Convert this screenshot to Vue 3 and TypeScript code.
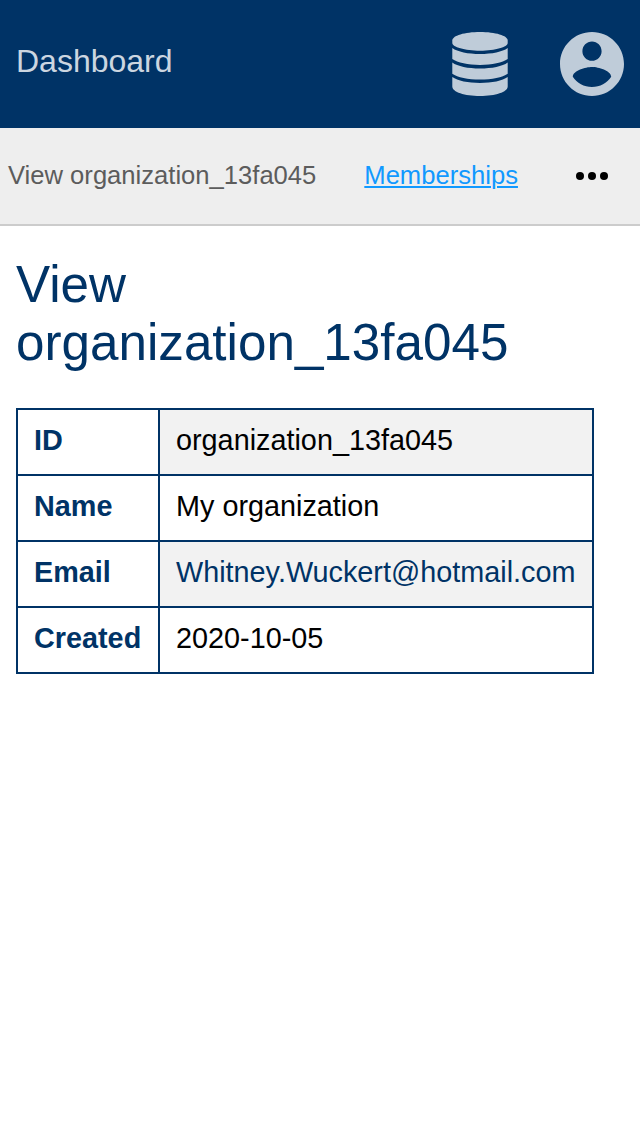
<script setup lang="ts">
interface Row { label: string; value: string; mail?: boolean }

const name = 'organization_13fa045'
const rows: Row[] = [
  { label: 'ID', value: name },
  { label: 'Name', value: 'My organization' },
  { label: 'Email', value: 'Whitney.Wuckert@hotmail.com', mail: true },
  { label: 'Created', value: '2020-10-05' },
]
</script>

<template>
  <div class="page">
    <header class="topbar">
      <a class="brand">Dashboard</a>
      <nav class="icons">
        <svg class="database" viewBox="4 0 56 64">
          <path d="M4.300 8.500C4.300 3.600 16.700 0 32 0S59.700 3.600 59.700 8.500V11C59.700 15 47.300 18.700 32 18.700S4.300 15 4.300 11Z" />
          <path d="M4.300 15.900C9.500 19.800 20 21.900 32 21.900S54.500 19.800 59.700 15.900V27.100C54.500 30.900 44 32.900 32 32.900S9.500 30.900 4.300 27.100Z" />
          <path d="M4.300 30.500C9.500 34.400 20 36.500 32 36.500S54.500 34.400 59.700 30.500V41.700C54.500 45.500 44 47.500 32 47.500S9.500 45.500 4.300 41.700Z" />
          <path d="M4.300 45.100C9.500 49 20 51 32 51S54.500 49 59.700 45.100V54.500C59.700 60 47.300 64 32 64S4.300 60 4.300 54.500Z" />
        </svg>
        <svg class="account" viewBox="2 2 20 20">
          <path d="M12 2C6.480 2 2 6.480 2 12s4.480 10 10 10 10-4.480 10-10S17.520 2 12 2zm0 3c1.660 0 3 1.340 3 3s-1.340 3-3 3-3-1.340-3-3 1.340-3 3-3zm0 14.200c-2.500 0-4.710-1.280-6-3.220.030-1.990 4-3.080 6-3.080 1.990 0 5.970 1.090 6 3.080-1.290 1.940-3.500 3.220-6 3.220z" />
        </svg>
      </nav>
    </header>
    <nav class="subbar">
      <span class="current">View {{ name }}</span>
      <a class="link">Memberships</a>
      <svg class="more" viewBox="0 0 32 8">
        <circle cx="4" cy="4" r="4" /><circle cx="16" cy="4" r="4" /><circle cx="28" cy="4" r="4" />
      </svg>
    </nav>
    <main>
      <h1>View {{ name }}</h1>
      <table>
        <tbody>
          <tr v-for="row in rows" :key="row.label">
            <th>{{ row.label }}</th>
            <td><a v-if="row.mail" class="mail">{{ row.value }}</a><template v-else>{{ row.value }}</template></td>
          </tr>
        </tbody>
      </table>
    </main>
  </div>
</template>

<style scoped>
.page {
  min-height: 1136px;
  background: #fff;
  color: #000;
  font-family: "Liberation Sans", Arial, sans-serif;
}
.topbar {
  display: flex;
  justify-content: space-between;
  align-items: center;
  box-sizing: border-box;
  height: 128px;
  padding: 0 16px;
  background: #036;
}
.brand {
  color: #ccd6e0;
  font-size: 32px;
  line-height: 36px;
  padding-bottom: 6px;
}
.icons {
  display: flex;
  gap: 52px;
}
.icons svg { height: 64px; fill: #bfccd9; }
.database { width: 56px; }
.account { width: 64px; }
.subbar {
  display: flex;
  align-items: center;
  box-sizing: border-box;
  height: 98px;
  padding: 0 32px 2px 8px;
  background: #eee;
  border-bottom: 2px solid #ccc;
  font-size: 25.6px;
  line-height: 30px;
  white-space: nowrap;
}
.current { color: #5c5c5c; }
.link {
  margin-left: 48px;
  color: #1199ff;
  text-decoration: underline;
  text-decoration-thickness: 2px;
  text-underline-offset: 2px;
}
.more {
  width: 32px;
  height: 8px;
  margin: 2px 0 0 auto;
}
main { padding: 30px 16px 0; }
h1 {
  margin: 0 0 36px;
  color: #036;
  font-size: 51.2px;
  font-weight: 400;
  line-height: 58px;
}
table {
  border-collapse: collapse;
  font-size: 28.8px;
  line-height: 32px;
}
th, td {
  height: 32px;
  padding: 14px 16px 18px;
  border: 2px solid #036;
  text-align: left;
  white-space: nowrap;
}
th { min-width: 108px; color: #036; }
td { min-width: 400px; }
tr:nth-child(odd) td { background: #f2f2f2; }
.mail { color: #036; }
</style>
